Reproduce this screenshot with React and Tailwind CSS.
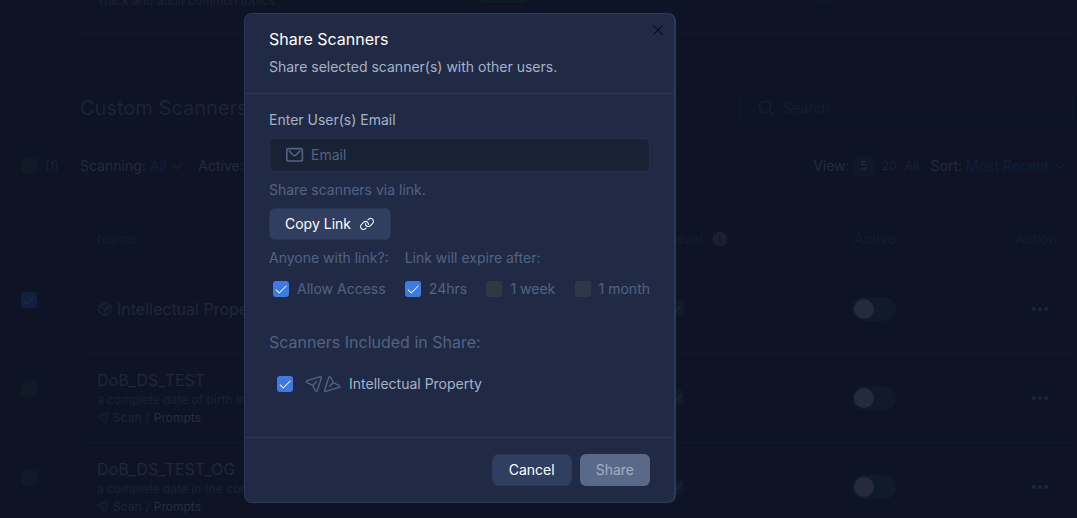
import React, { useState } from 'react';
import { PiCaretDown, PiCheck, PiInfoFill, PiLink, PiMagnifyingGlass, PiPackage, PiX } from 'react-icons/pi';

const SCANNERS = [
    { id: 'ip', name: 'Intellectual Property', packaged: true },
    { id: 'dob', name: 'DoB_DS_TEST', description: 'a complete date of birth in any format' },
    { id: 'dob-og', name: 'DoB_DS_TEST_OG', description: 'a complete date in the context of birth' },
];

function PlaneIcon({ className }) {
    return (
        <svg viewBox="0 0 18 18" fill="none" stroke="currentColor" strokeWidth="1.4" strokeLinecap="round" strokeLinejoin="round" className={className} aria-hidden="true">
            <path d="M15.2 1.6 L2.2 5.6 C1.2 5.9 1.1 7 2 7.5 L7.2 10.2 C7.6 10.4 7.8 10.6 8 11 L10.4 15.8 C10.8 16.7 12 16.6 12.3 15.6 L16.3 2.7 C16.5 2 15.9 1.4 15.2 1.6 Z" />
            <path d="M7.8 10.3 L11.4 6.7" />
        </svg>
    );
}

function MailIcon({ className }) {
    return (
        <svg viewBox="0 0 20 20" fill="none" stroke="currentColor" strokeWidth="1.6" strokeLinecap="round" strokeLinejoin="round" className={className} aria-hidden="true">
            <rect x="1.8" y="3.6" width="15.6" height="12.4" rx="1.8" />
            <path d="M4.2 6 L8.5 10.2 C9.1 10.8 10.1 10.8 10.7 10.2 L15 6" />
        </svg>
    );
}

function DotsIcon({ className }) {
    return (
        <svg viewBox="0 0 18 6" fill="currentColor" className={className} aria-hidden="true">
            <circle cx="2.8" cy="3" r="2.1" />
            <circle cx="9" cy="3" r="2.1" />
            <circle cx="15.2" cy="3" r="2.1" />
        </svg>
    );
}

function Checkbox({ checked, onChange, id, label, tone = 'bright' }) {
    const tones = {
        bright: 'bg-[#2d3947] checked:bg-[#3e7ae2]',
        dim: 'bg-[#101926] checked:bg-[#10213f]',
        level: 'bg-[#101a2a] checked:bg-[#101a2a]',
    };
    return (
        <span className="relative inline-flex size-4 shrink-0">
            <input
                id={id}
                type="checkbox"
                aria-label={label}
                checked={checked}
                onChange={onChange}
                className={`size-4 appearance-none rounded-[3px] ${tones[tone]}`}
            />
            {checked && (
                <PiCheck className={`pointer-events-none absolute inset-0 m-auto size-3.5 ${tone === 'bright' ? 'text-white' : 'text-[#272e3d]'}`} />
            )}
        </span>
    );
}

function ScannerRow({ scanner, selected, onSelect }) {
    const [active, setActive] = useState(false);
    const [level, setLevel] = useState(true);
    const line = 'border-b border-[#111828]';

    return (
        <tr className="h-[89px]">
            <td className="pb-5 pl-[21px]">
                <div className="flex">
                    <Checkbox tone="dim" label={`Select ${scanner.name}`} checked={selected} onChange={onSelect} />
                </div>
            </td>
            <td className={`${line} pl-4 whitespace-nowrap`}>
                <div className="flex items-center gap-1 text-base leading-6 text-[#212736]">
                    {scanner.packaged && <PiPackage className="size-4" />}
                    {scanner.name}
                </div>
                {scanner.description && (
                    <>
                        <div className="text-xs leading-4 text-[#1b2231]">{scanner.description}</div>
                        <div className="flex items-center gap-1 text-xs leading-5 text-[#1c2433]">
                            <PlaneIcon className="size-3" />
                            <span>Scan</span>
                            <span>/</span>
                            <span className="text-[#262d3c]">Prompts</span>
                        </div>
                    </>
                )}
            </td>
            <td className={line}>
                <div className="flex">
                    <Checkbox tone="level" label={`Level for ${scanner.name}`} checked={level} onChange={() => setLevel(!level)} />
                </div>
            </td>
            <td className={line}>
                <button
                    role="switch"
                    aria-checked={active}
                    aria-label={`Activate ${scanner.name}`}
                    onClick={() => setActive(!active)}
                    className={`flex h-6 w-11 items-center rounded-full bg-[#101a2a] px-0.5 ${active ? 'justify-end' : ''}`}
                >
                    <span className="size-5 rounded-full bg-[#252b3a]" />
                </button>
            </td>
            <td className={`${line} pr-6`}>
                <button aria-label="More actions" className="ml-auto flex text-[#1e2535]">
                    <DotsIcon className="h-1.5 w-[18px]" />
                </button>
            </td>
        </tr>
    );
}

function ScannersPage({ selected, toggleSelected }) {
    return (
        <main className="-mt-[56px] pr-1">
            <section className="ml-20 flex h-[90px] items-center border-b border-[#111828] pl-[17px]">
                <div className="w-[373px]">
                    <h3 className="text-base leading-6 text-[#212736]">Topics</h3>
                    <p className="text-xs leading-4 text-[#1b2231]">Track and audit common topics</p>
                </div>
                <div className="grow">
                    <span className="flex h-9 w-16 items-center rounded-lg border border-[#101727] px-1.5">
                        <span className="h-7 w-full rounded-sm bg-[#0d1b27]" />
                    </span>
                </div>
                <div className="w-[265px]">
                    <span className="flex h-6 w-8 rounded-full bg-[#101a2a]" />
                </div>
            </section>

            <div className="mt-14 ml-20 flex items-center justify-between">
                <h2 className="text-xl leading-9 text-[#1d2333]">Custom Scanners</h2>
                <label className="flex h-[34px] w-[333px] items-center gap-2 rounded-md border border-[#0f1929] px-4 text-[#152031]">
                    <PiMagnifyingGlass className="size-5" />
                    <input placeholder="Search" aria-label="Search" className="w-full text-sm outline-none placeholder:text-[#141e2c]" />
                </label>
            </div>

            <div className="mt-7 flex h-6 items-center pr-1.5 text-sm text-[#252b3a]">
                <div className="flex w-20 shrink-0 items-center gap-2 pl-[21px] text-xs text-[#1d2333]">
                    <Checkbox tone="dim" label="Select all" checked={false} onChange={() => {}} />
                    (1)
                </div>
                <span>Scanning:</span>
                <button className="ml-1 flex items-center gap-1 text-[#0f1f3c]">
                    All <PiCaretDown className="size-3.5 text-[#1b2333]" />
                </button>
                <span className="ml-3.5">Active:</span>
                <div className="ml-auto flex items-center">
                    <span>View:</span>
                    <button className="ml-1 size-5 rounded-sm bg-[#0f1929] text-xs">5</button>
                    <button className="ml-2 text-xs text-[#1b2232]">20</button>
                    <button className="ml-2 text-xs text-[#1b2232]">All</button>
                    <span className="ml-3">Sort:</span>
                    <button className="ml-1 flex items-center gap-1 text-[#0f1f3c]">
                        Most Recent <PiCaretDown className="size-3.5 text-[#1b2333]" />
                    </button>
                </div>
            </div>

            <table className="mt-[34px] w-full table-fixed border-separate border-spacing-0">
                <colgroup>
                    <col className="w-[81px]" />
                    <col />
                    <col className="w-[184px]" />
                    <col className="w-[125px]" />
                    <col className="w-24" />
                </colgroup>
                <thead>
                    <tr className="h-[53px] text-left text-sm text-[#131d2c]">
                        <td />
                        <th className="pl-4 font-normal">Name</th>
                        <th className="font-normal">
                            <span className="flex items-center gap-2">Level <PiInfoFill className="size-[18px] text-[#1a2030]" /></span>
                        </th>
                        <th className="pl-0.5 font-normal">Active</th>
                        <th className="pr-4 text-right font-normal">Action</th>
                    </tr>
                </thead>
                <tbody>
                    {SCANNERS.map(scanner => (
                        <ScannerRow
                            key={scanner.id}
                            scanner={scanner}
                            selected={selected.includes(scanner.id)}
                            onSelect={() => toggleSelected(scanner.id)}
                        />
                    ))}
                </tbody>
            </table>
        </main>
    );
}

function ShareDialog({ onClose }) {
    const [email, setEmail] = useState('');
    const [allowAccess, setAllowAccess] = useState(true);
    const [expiry, setExpiry] = useState('24hrs');
    const [included, setIncluded] = useState(true);

    return (
        <div className="absolute inset-0 flex items-start pt-[13px] pl-[244px]">
            <div role="dialog" aria-labelledby="share-title" className="relative w-[432px] rounded-lg border border-r-2 border-[#2a3a5c] bg-[#202a45] text-sm leading-5">
                <button aria-label="Close" onClick={onClose} className="absolute top-1.5 right-1.5 p-0.5 text-[#070b14]">
                    <PiX className="size-4" />
                </button>

                <header className="border-b border-[#2a3958] px-6 pt-[13px] pb-4">
                    <h1 id="share-title" className="text-base leading-6 text-white">Share Scanners</h1>
                    <p className="mt-1.5 text-[#a6b2c8]">Share selected scanner(s) with other users.</p>
                </header>

                <div className="px-6 pt-4 pb-[43px] text-[#526384]">
                    <label htmlFor="email" className="block text-[#a6b2c8]">Enter User(s) Email</label>
                    <div className="mt-2 flex h-[34px] items-center gap-1.5 rounded-md border border-[#232f4b] bg-[#192135] px-[15px]">
                        <MailIcon className="size-5 shrink-0" />
                        <input
                            id="email"
                            type="email"
                            placeholder="Email"
                            value={email}
                            onChange={e => setEmail(e.target.value)}
                            className="w-full text-[#a6b2c8] outline-none placeholder:text-[#526384]"
                        />
                    </div>

                    <p className="mt-2">Share scanners via link.</p>
                    <button className="mt-2 flex h-8 items-center gap-2 rounded-md border border-[#293654] bg-[#303e60] px-[15px] text-white">
                        Copy Link <PiLink className="size-4" />
                    </button>

                    <div className="mt-2 flex gap-4">
                        <span>Anyone with link?:</span>
                        <span>Link will expire after:</span>
                    </div>
                    <div className="mt-[11px] flex items-center justify-between pl-1">
                        <label className="flex items-center gap-2">
                            <Checkbox checked={allowAccess} onChange={() => setAllowAccess(!allowAccess)} />
                            Allow Access
                        </label>
                        {['24hrs', '1 week', '1 month'].map(option => (
                            <label key={option} className="flex items-center gap-2">
                                <Checkbox checked={expiry === option} onChange={() => setExpiry(option)} />
                                {option}
                            </label>
                        ))}
                    </div>

                    <h2 className="mt-[31px] text-base leading-6">Scanners Included in Share:</h2>
                    <label className="mt-5 flex items-center pl-2 text-[#a6b2c8]">
                        <Checkbox checked={included} onChange={() => setIncluded(!included)} />
                        <span className="ml-3 flex text-[#526384]">
                            <PlaneIcon className="size-[18px]" />
                            <PlaneIcon className="size-[18px] rotate-180" />
                        </span>
                        <span className="ml-2">Intellectual Property</span>
                    </label>
                </div>

                <footer className="flex justify-end gap-2 border-t border-[#2a3958] px-6 py-4">
                    <button onClick={onClose} className="h-8 rounded-md border border-[#293654] bg-[#303e60] px-4 text-white">Cancel</button>
                    <button className="h-8 rounded-md bg-[#5a6988] px-4 text-[#a3b0c6]">Share</button>
                </footer>
            </div>
        </div>
    );
}

export default function App() {
    const [open, setOpen] = useState(true);
    const [selected, setSelected] = useState(['ip']);

    const toggleSelected = (id) => {
        setSelected(selected.includes(id) ? selected.filter(s => s !== id) : [...selected, id]);
    };

    return (
        <div className="relative flow-root h-screen overflow-hidden bg-[#0e1425] font-['Inter','Liberation_Sans',sans-serif]">
            <ScannersPage selected={selected} toggleSelected={toggleSelected} />
            {open && <ShareDialog onClose={() => setOpen(false)} />}
        </div>
    );
}
